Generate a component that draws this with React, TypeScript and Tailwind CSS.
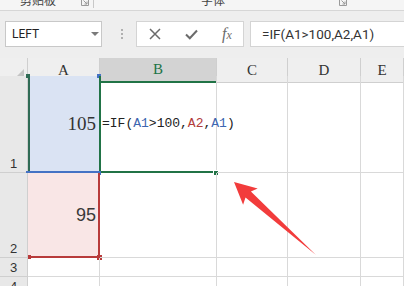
import type { ReactNode } from 'react'

const GRID = 'grid grid-cols-[28px_72px_117px_71px_73px_1fr]'
const CELL = 'relative border-r border-b border-[#d9d9d9]'
const HEAD = "relative flex items-center justify-center border-r border-b border-[#cfcfcf] bg-[#efefef] text-[15px] text-[#333] font-['Liberation_Serif',serif]"
const ROWHEAD = "relative flex items-end justify-center pb-[1px] border-r border-b border-[#cfcfcf] bg-[#e8e8e8] text-[13px] leading-[15px] text-[#333] font-['Liberation_Sans',sans-serif]"

function Launcher() {
  return (
    <svg width="8" height="8" viewBox="0 0 8 8" className="-mt-[2px]">
      <path d="M0.5 0.5 V7.5 H7.5 V0.5" fill="none" stroke="#9a9a9a" strokeWidth="1" />
      <path d="M2.5 2.5 L6 6 M6 3.5 V6 H3.5" fill="none" stroke="#9a9a9a" strokeWidth="1" />
    </svg>
  )
}

function Row({ head, height, children }: { head: string; height: string; children: ReactNode }) {
  return (
    <div className={`${GRID} ${height}`}>
      <div className={ROWHEAD}>{head}</div>
      {children}
    </div>
  )
}

export default function App() {
  return (
    <div className="relative w-[404px] h-[286px] overflow-hidden bg-white select-none">
      {/* ribbon bottom edge */}
      <div className="h-[11px] bg-[#f5f5f5] border-b border-[#d6d6d6] flex items-start overflow-hidden text-[12px] leading-[12px] text-[#444] font-['Noto_Sans_CJK_SC',sans-serif]">
        <span className="ml-[20px] -mt-[6px]">剪贴板</span>
        <span className="ml-[25px]"><Launcher /></span>
        <span className="ml-[4px] w-px h-[8px] bg-[#c8c8c8]" />
        <span className="ml-[107px] -mt-[6px]">字体</span>
        <span className="ml-[114px]"><Launcher /></span>
      </div>

      {/* formula bar */}
      <div className="h-[47px] bg-[#eeeeee] flex items-start pt-[10px]">
        <div className="ml-[5px] w-[97px] h-[26px] border border-[#c8c8c8] bg-white flex items-center pl-[6px] pr-[2px] text-[12px] text-[#222] font-['Roboto',sans-serif]">
          <span className="flex-1">LEFT</span>
          <span className="w-0 h-0 border-l-[4px] border-r-[4px] border-t-[4px] border-l-transparent border-r-transparent border-t-[#7a7a7a]" />
        </div>
        <div className="ml-[19px] h-[26px] flex flex-col justify-center gap-[2px]">
          <span className="w-[2px] h-[2px] bg-[#b0b0b0]" />
          <span className="w-[2px] h-[2px] bg-[#b0b0b0]" />
          <span className="w-[2px] h-[2px] bg-[#b0b0b0]" />
        </div>
        <div className="ml-[13px] w-[108px] h-[26px] border border-[#d4d4d4] bg-white flex items-center pl-[12px]">
          <svg width="12" height="12" viewBox="0 0 12 12">
            <path d="M1 1 L11 11 M11 1 L1 11" stroke="#6b6b6b" strokeWidth="1.5" />
          </svg>
          <svg width="13" height="11" viewBox="0 0 13 11" className="ml-[24px]">
            <path d="M1 5.5 L4.8 9.3 L12 1.5" fill="none" stroke="#6b6b6b" strokeWidth="2" />
          </svg>
          <span className="ml-[24px] italic text-[16px] text-[#6b6b6b] font-['Liberation_Serif',serif]">
            f<span className="text-[12px]">x</span>
          </span>
        </div>
        <div className="ml-[6px] flex-1 -mr-[4px] h-[26px] border border-[#d4d4d4] bg-white flex items-center pl-[11px] text-[13.5px] text-[#333] font-['Roboto',sans-serif]">
          =IF(A1&gt;100,A2,A1)
        </div>
      </div>

      {/* column headers */}
      <div className={`${GRID} h-[18px]`}>
        <div className="relative border-r border-b border-[#cfcfcf] bg-[#efefef]">
          <svg width="11" height="11" viewBox="0 0 11 11" className="absolute right-[2px] bottom-[2px]">
            <path d="M10 0 V10 H0 Z" fill="#c4c4c4" />
          </svg>
        </div>
        <div className={HEAD}>A</div>
        <div className="relative flex items-center justify-center border-r border-[#cfcfcf] border-b-2 border-b-[#217346] bg-[#d3d3d3] text-[15px] text-[#217346] font-['Liberation_Serif',serif]">B</div>
        <div className={HEAD}>C</div>
        <div className={HEAD}>D</div>
        <div className={HEAD}>E</div>
      </div>

      {/* row 1 */}
      <Row head="1" height="h-[97px]">
        <div className={`${CELL} bg-[#dae3f3] flex items-center justify-end pr-[3px] text-[19px] text-[#333] font-['Liberation_Serif',serif]`}>
          105
          <div className="absolute top-0 left-0 -right-px -bottom-px border-l-2 border-l-[#2f6b55] border-b-2 border-b-[#4472c4]" />
          <span className="absolute -top-[2px] -left-[2px] w-[4px] h-[4px] bg-[#2f6b55]" />
          <span className="absolute -bottom-[3px] -left-[2px] w-[4px] h-[4px] bg-[#4472c4]" />
          <span className="absolute -top-[2px] -right-[2px] w-[4px] h-[4px] bg-[#4472c4]" />
        </div>
        <div className={`${CELL} flex items-center pl-[2px] text-[13px] text-[#222] whitespace-nowrap font-['Liberation_Mono',monospace]`}>
          =IF(<span className="text-[#3d66b0]">A1</span>&gt;100,<span className="text-[#b23b3b]">A2</span>,<span className="text-[#3d66b0]">A1</span>)
          <div className="absolute top-0 -left-px right-0 -bottom-px border-l-2 border-b-2 border-[#217346]" />
          <span className="absolute -bottom-[3px] -left-[3px] w-[4px] h-[4px] bg-[#4472c4]" />
          <span className="absolute -bottom-[4px] -right-[3px] w-[6px] h-[6px] bg-[#217346] border border-white" />
        </div>
        <div className={CELL} />
        <div className={CELL} />
        <div className={CELL} />
      </Row>

      {/* row 2 */}
      <Row head="2" height="h-[85px]">
        <div className={`${CELL} bg-[#f9e6e6] flex items-center justify-end pr-[3px] text-[18px] text-[#3a3a3a] font-['Liberation_Sans',sans-serif]`}>
          95
          <div className="absolute top-0 left-0 -right-px -bottom-px border-r-2 border-b-2 border-[#b83b3b]" />
          <span className="absolute -bottom-[3px] -right-[3px] w-[5px] h-[5px] bg-[#b83b3b]" />
          <span className="absolute -bottom-[2px] left-0 w-[3px] h-[4px] bg-[#b83b3b]" />
        </div>
        <div className={CELL} />
        <div className={CELL} />
        <div className={CELL} />
        <div className={CELL} />
      </Row>

      <Row head="3" height="h-[19px]">
        <div className={CELL} />
        <div className={CELL} />
        <div className={CELL} />
        <div className={CELL} />
        <div className={CELL} />
      </Row>

      <Row head="4" height="h-[19px]">
        <div className={CELL} />
        <div className={CELL} />
        <div className={CELL} />
        <div className={CELL} />
        <div className={CELL} />
      </Row>

      {/* annotation arrow */}
      <svg className="absolute inset-0 pointer-events-none" width="404" height="286" viewBox="0 0 404 286">
        <polygon
          points="234,182 257.7,188.4 250.9,191.6 316,255 245.5,197.6 243.1,204.8"
          fill="#f23c3c"
        />
      </svg>
    </div>
  )
}
